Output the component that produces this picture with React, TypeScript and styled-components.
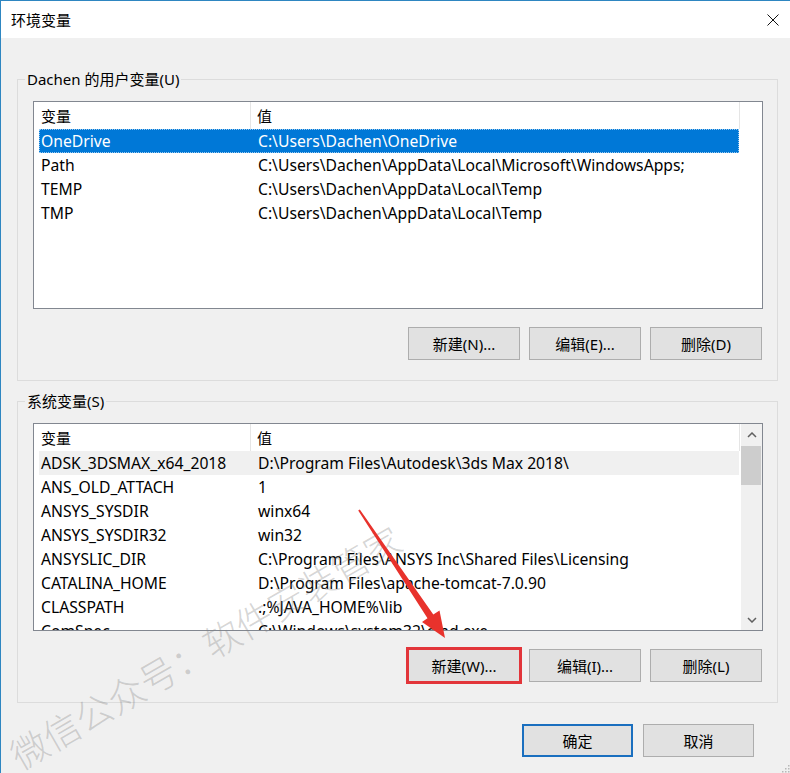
import React from "react";
import styled, { createGlobalStyle, css } from "styled-components";

const GlobalStyle = createGlobalStyle`
  html, body { margin: 0; padding: 0; background: #f0f0f0; }
  body {
    font-family: "Noto Sans", "Noto Sans CJK SC", sans-serif;
    font-size: 15px;
    color: #000;
  }
  * { box-sizing: border-box; }
`;

const Window = styled.div`
  position: relative;
  width: 790px;
  height: 773px;
  background: #f0f0f0;
  border-top: 1px solid #2e86c1;
  border-left: 1px solid #2e86c1;
  overflow: hidden;
`;

const TitleBar = styled.div`
  height: 37px;
  background: #fff;
  display: flex;
  align-items: center;
  justify-content: space-between;
  padding: 0 11px 0 10px;
  font-size: 15px;
`;

const Title = styled.span`
  line-height: 20px;
`;

const CloseIcon = styled.svg`
  width: 12px;
  height: 12px;
  display: block;
`;

const Body = styled.div`
  padding: 0 12px 0 16px;
`;

const Group = styled.fieldset<{ $top: number }>`
  margin: ${(p) => p.$top}px 0 0 0;
  padding: 0;
  border: 1px solid #dcdcdc;
  min-width: 0;
`;

const Legend = styled.legend`
  margin-left: 7px;
  padding: 0 2px;
  line-height: 20px;
  font-size: 15px;
`;

const GroupContent = styled.div`
  padding: 12px 14px 20px 15px;
`;

const ListFrame = styled.div`
  width: 730px;
  height: 208px;
  border: 1px solid #828790;
  background: #fff;
  display: flex;
  overflow: hidden;
`;

const ListContent = styled.div`
  flex: 1;
  min-width: 0;
  overflow: hidden;
`;

const HeaderRow = styled.div`
  width: 706px;
  height: 27px;
  display: grid;
  grid-template-columns: 217px 1fr;
  border-right: 1px solid #e5e5e5;
`;

const HeaderCell = styled.div<{ $first?: boolean }>`
  display: flex;
  align-items: center;
  padding-left: ${(p) => (p.$first ? 7 : 6)}px;
  border-right: ${(p) => (p.$first ? "1px solid #e5e5e5" : "none")};
  white-space: nowrap;
`;

const Rows = styled.div`
  padding-left: 5px;
`;

const Row = styled.div<{ $state?: "selected" | "hover" }>`
  width: 700px;
  height: 24px;
  display: grid;
  grid-template-columns: 212px 1fr;
  align-items: center;
  white-space: nowrap;
  font-size: 15.7px;
  line-height: 22px;
  ${(p) =>
    p.$state === "selected" &&
    css`
      background: #0078d7;
      color: #fff;
      outline: 1px dotted rgba(255, 255, 255, 0.6);
      outline-offset: -1px;
    `}
  ${(p) =>
    p.$state === "hover" &&
    css`
      background: #f0f0f0;
    `}
`;

const Cell = styled.div<{ $first?: boolean }>`
  padding-left: ${(p) => (p.$first ? 2 : 7)}px;
  overflow: hidden;
`;

const Scrollbar = styled.div`
  width: 21px;
  background: #f0f0f0;
  display: flex;
  flex-direction: column;
`;

const ScrollArrow = styled.div`
  height: 21px;
  display: flex;
  align-items: center;
  justify-content: center;
`;

const Thumb = styled.div`
  height: 39px;
  margin: 1px 1px 0 0;
  background: #cdcdcd;
`;

const ScrollTrack = styled.div`
  flex: 1;
`;

const ButtonRow = styled.div`
  margin-top: 18px;
  padding-right: 1px;
  display: flex;
  justify-content: flex-end;
  gap: 9px;
`;

const Button = styled.button<{ $w?: number; $default?: boolean; $marked?: boolean }>`
  width: ${(p) => p.$w ?? 112}px;
  height: 33px;
  margin: 0;
  padding: 0;
  background: #e1e1e1;
  border: 1px solid #adadad;
  font-family: "Noto Sans", "Noto Sans CJK SC", sans-serif;
  font-size: 15px;
  color: #000;
  ${(p) =>
    p.$default &&
    css`
      border: 2px solid #1a6fbf;
    `}
  ${(p) =>
    p.$marked &&
    css`
      outline: 3px solid #e2353a;
      outline-offset: -1px;
    `}
`;

const Footer = styled.div`
  margin-top: 21px;
  padding-right: 24px;
  display: flex;
  justify-content: flex-end;
  gap: 10px;
`;

const Watermark = styled.div`
  position: absolute;
  left: 12px;
  top: 738px;
  font-family: "Noto Sans CJK SC", sans-serif;
  font-weight: 300;
  font-size: 37px;
  line-height: 37px;
  white-space: nowrap;
  color: rgba(130, 130, 130, 0.32);
  transform-origin: 0 50%;
  transform: rotate(-30deg);
  pointer-events: none;
`;

const Overlay = styled.svg`
  position: absolute;
  left: 0;
  top: 0;
  pointer-events: none;
`;

const Grip = styled.svg`
  position: absolute;
  right: 0;
  bottom: 0;
  pointer-events: none;
`;

type Item = { name: string; value: string };

const userVars: Item[] = [
  { name: "OneDrive", value: "C:\\Users\\Dachen\\OneDrive" },
  { name: "Path", value: "C:\\Users\\Dachen\\AppData\\Local\\Microsoft\\WindowsApps;" },
  { name: "TEMP", value: "C:\\Users\\Dachen\\AppData\\Local\\Temp" },
  { name: "TMP", value: "C:\\Users\\Dachen\\AppData\\Local\\Temp" },
];

const sysVars: Item[] = [
  { name: "ADSK_3DSMAX_x64_2018", value: "D:\\Program Files\\Autodesk\\3ds Max 2018\\" },
  { name: "ANS_OLD_ATTACH", value: "1" },
  { name: "ANSYS_SYSDIR", value: "winx64" },
  { name: "ANSYS_SYSDIR32", value: "win32" },
  { name: "ANSYSLIC_DIR", value: "C:\\Program Files\\ANSYS Inc\\Shared Files\\Licensing" },
  { name: "CATALINA_HOME", value: "D:\\Program Files\\apache-tomcat-7.0.90" },
  { name: "CLASSPATH", value: ".;%JAVA_HOME%\\lib" },
  { name: "ComSpec", value: "C:\\Windows\\system32\\cmd.exe" },
];

const Chevron = ({ up }: { up?: boolean }) => (
  <svg width="10" height="6" viewBox="0 0 10 6">
    <polyline
      points={up ? "1,5 5,1 9,5" : "1,1 5,5 9,1"}
      fill="none"
      stroke="#606060"
      strokeWidth="1.5"
    />
  </svg>
);

function VarList({
  items,
  selected,
  hover,
  scroll,
}: {
  items: Item[];
  selected?: number;
  hover?: number;
  scroll?: boolean;
}) {
  return (
    <ListFrame>
      <ListContent>
        <HeaderRow>
          <HeaderCell $first>变量</HeaderCell>
          <HeaderCell>值</HeaderCell>
        </HeaderRow>
        <Rows>
          {items.map((it, i) => (
            <Row
              key={it.name}
              $state={i === selected ? "selected" : i === hover ? "hover" : undefined}
            >
              <Cell $first>{it.name}</Cell>
              <Cell>{it.value}</Cell>
            </Row>
          ))}
        </Rows>
      </ListContent>
      {scroll && (
        <Scrollbar>
          <ScrollArrow>
            <Chevron up />
          </ScrollArrow>
          <Thumb />
          <ScrollTrack />
          <ScrollArrow>
            <Chevron />
          </ScrollArrow>
        </Scrollbar>
      )}
    </ListFrame>
  );
}

export default function App() {
  return (
    <>
      <GlobalStyle />
      <Window>
        <TitleBar>
          <Title>环境变量</Title>
          <CloseIcon viewBox="0 0 12 12">
            <line x1="0.5" y1="0.5" x2="11.5" y2="11.5" stroke="#111" strokeWidth="1" />
            <line x1="11.5" y1="0.5" x2="0.5" y2="11.5" stroke="#111" strokeWidth="1" />
          </CloseIcon>
        </TitleBar>
        <Body>
          <Group $top={31}>
            <Legend>Dachen 的用户变量(U)</Legend>
            <GroupContent>
              <VarList items={userVars} selected={0} />
              <ButtonRow>
                <Button>新建(N)...</Button>
                <Button>编辑(E)...</Button>
                <Button>删除(D)</Button>
              </ButtonRow>
            </GroupContent>
          </Group>
          <Group $top={10}>
            <Legend>系统变量(S)</Legend>
            <GroupContent>
              <VarList items={sysVars} hover={0} scroll />
              <ButtonRow>
                <Button $marked>新建(W)...</Button>
                <Button>编辑(I)...</Button>
                <Button>删除(L)</Button>
              </ButtonRow>
            </GroupContent>
          </Group>
          <Footer>
            <Button $w={111} $default>
              确定
            </Button>
            <Button $w={111}>取消</Button>
          </Footer>
        </Body>
        <Watermark>微信公众号：软件安装管家</Watermark>
        <Overlay width="790" height="773" viewBox="0 0 790 773">
          <polygon
            points="358.8,508.4 432.3,613.4 438.5,609.6 444,637 421,621 426.5,617.3 357.2,509.6"
            fill="#e8322c"
          />
        </Overlay>
        <Grip width="10" height="10" viewBox="0 0 10 10">
          {[
            [8, 2],
            [5, 5],
            [8, 5],
            [2, 8],
            [5, 8],
            [8, 8],
          ].map(([x, y]) => (
            <rect key={`${x}-${y}`} x={x} y={y} width="1.5" height="1.5" fill="#b8b8b8" />
          ))}
        </Grip>
      </Window>
    </>
  );
}
